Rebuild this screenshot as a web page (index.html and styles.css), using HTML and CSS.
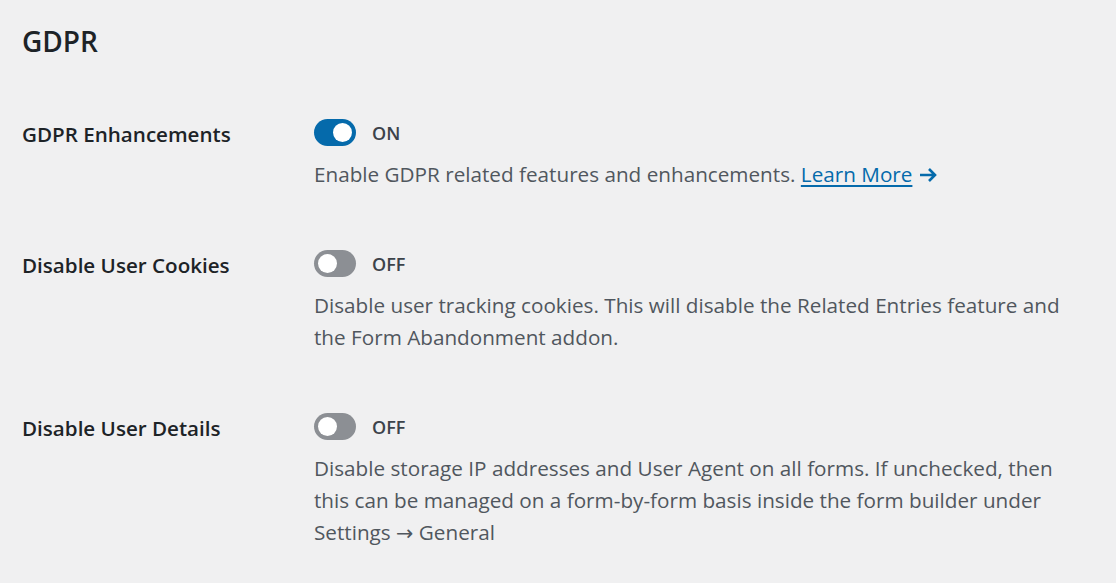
FILE: index.html
```html
<!DOCTYPE html>
<html lang="en">
<head>
<meta charset="utf-8">
<title>GDPR</title>
<link rel="stylesheet" href="styles.css">
</head>
<body>
<main class="page">
  <h2 class="title">GDPR</h2>
  <div class="rows">
    <div class="row">
      <div class="label">GDPR Enhancements</div>
      <div class="field">
        <div class="switch-line">
          <span class="toggle on"><span class="knob"></span></span>
          <span class="state">ON</span>
        </div>
        <p class="desc">Enable GDPR related features and enhancements. <a class="link" href="#">Learn More</a> <svg class="arrow" width="20" height="18" viewBox="0 0 20 18" aria-hidden="true"><path d="M2 9H17M11 3L17 9L11 15" fill="none" stroke="#056aab" stroke-width="2.6" stroke-linecap="butt" stroke-linejoin="miter"/></svg></p>
      </div>
    </div>
    <div class="row">
      <div class="label">Disable User Cookies</div>
      <div class="field">
        <div class="switch-line">
          <span class="toggle"><span class="knob"></span></span>
          <span class="state">OFF</span>
        </div>
        <p class="desc">Disable user tracking cookies. This will disable the Related Entries feature and the Form Abandonment addon.</p>
      </div>
    </div>
    <div class="row">
      <div class="label">Disable User Details</div>
      <div class="field">
        <div class="switch-line">
          <span class="toggle"><span class="knob"></span></span>
          <span class="state">OFF</span>
        </div>
        <p class="desc">Disable storage IP addresses and User Agent on all forms. If unchecked, then this can be managed on a form-by-form basis inside the form builder under Settings → General</p>
      </div>
    </div>
  </div>
</main>
</body>
</html>
```

FILE: styles.css
```css
html, body {
  margin: 0;
  padding: 0;
  background: #f0f0f1;
}
body {
  font-family: "Open Sans", "DejaVu Sans", "Liberation Sans", sans-serif;
  color: #1d2327;
}
.page {
  padding: 21px 22px 0 22px;
}
.title {
  margin: 0;
  font-size: 28px;
  line-height: 40px;
  font-weight: 600;
  color: #1d2327;
}
.rows {
  margin-top: 58px;
  display: flex;
  flex-direction: column;
  gap: 60px;
}
.row {
  display: grid;
  grid-template-columns: 292px 762px;
}
.label {
  font-size: 20.6px;
  font-weight: 600;
  line-height: 30px;
  color: #1d2327;
}
.switch-line {
  display: flex;
  align-items: center;
  gap: 16px;
  height: 27px;
}
.toggle {
  width: 42px;
  height: 27px;
  box-sizing: border-box;
  border-radius: 14px;
  background: #8c8f94;
  display: flex;
  align-items: center;
  padding: 0 4px;
}
.toggle.on {
  background: #056aab;
  justify-content: flex-end;
}
.knob {
  width: 19px;
  height: 19px;
  border-radius: 50%;
  background: #ffffff;
}
.state {
  font-size: 18px;
  font-weight: 600;
  color: #3c434a;
}
.desc {
  margin: 12px 0 0 0;
  font-size: 20.7px;
  line-height: 32px;
  color: #50575e;
}
.link {
  color: #056aab;
  text-decoration: underline;
  text-underline-offset: 3px;
}
.arrow {
  vertical-align: -2px;
}
```
